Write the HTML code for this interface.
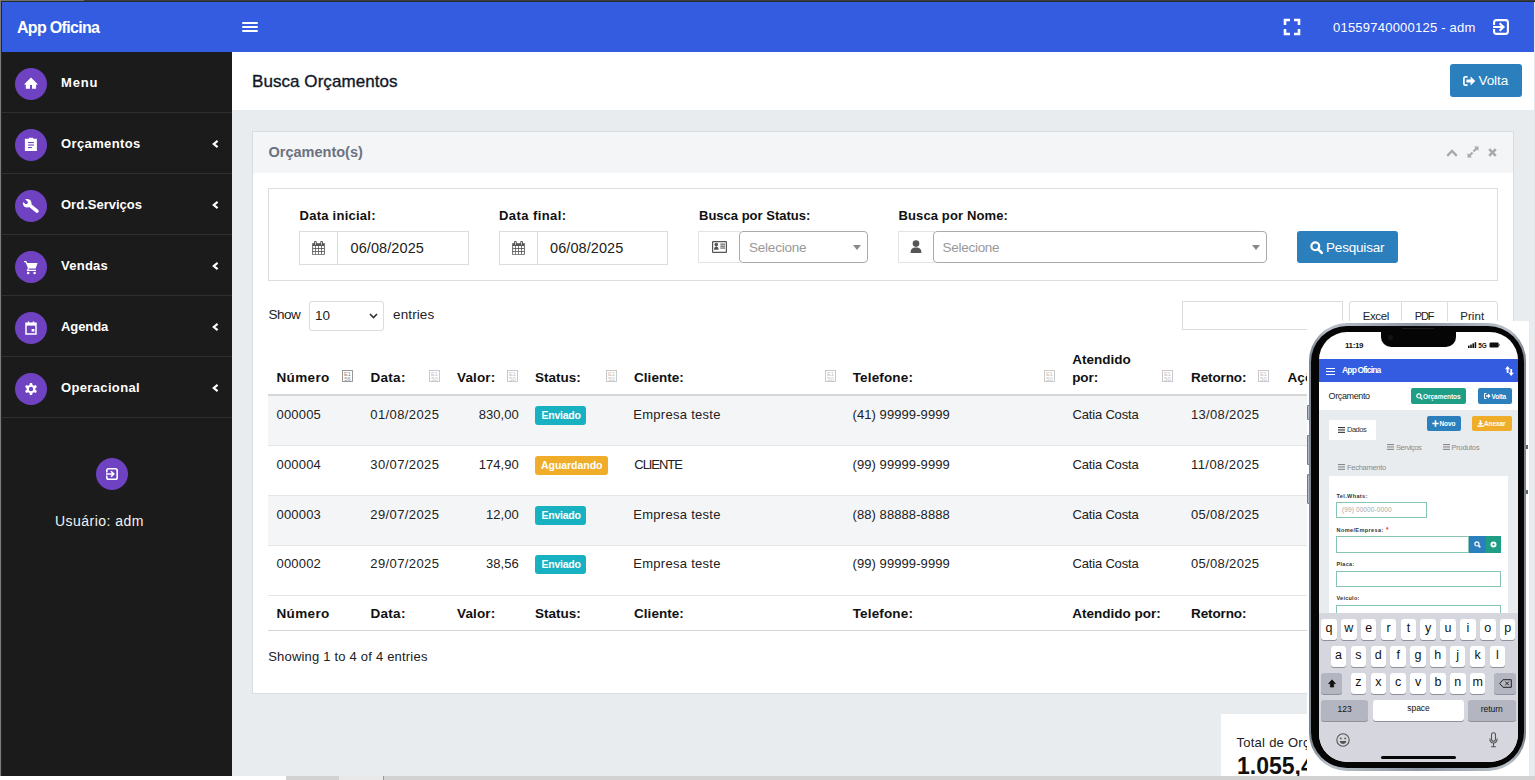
<!DOCTYPE html>
<html><head><meta charset="utf-8"><title>Busca Orçamentos</title>
<style>
html,body{margin:0;padding:0;}
body{width:1535px;height:780px;overflow:hidden;position:relative;background:#e9ecef;font-family:"Liberation Sans",sans-serif;}
.a{position:absolute;box-sizing:border-box;}
.t{position:absolute;white-space:nowrap;}
svg.a{overflow:visible;}
</style></head><body>
<div class="a" style="left:0px;top:0px;width:1535px;height:1px;background:#6e6e6e"></div>
<div class="a" style="left:84px;top:0px;width:1451px;height:1px;background:#3c3c3c"></div>
<div class="a" style="left:0px;top:1px;width:1535px;height:1px;background:#262a33"></div>
<div class="a" style="left:0px;top:0px;width:1px;height:780px;background:#7a7a7a"></div>
<div class="a" style="left:1px;top:1px;width:1px;height:776px;background:#22252b"></div>
<div class="a" style="left:1534px;top:2px;width:1px;height:776px;background:#e4e6ea"></div>
<div class="a" style="left:2px;top:2px;width:1532px;height:50px;background:#345ce0"></div>
<span id="t3844610" class="t" style="left:17px;top:18px;font-size:16px;line-height:20px;color:#ffffff;font-weight:bold;letter-spacing:-0.688px;">App Oficina</span>
<div class="a" style="left:242px;top:22px;width:16px;height:2px;background:#fff;border-radius:1px"></div>
<div class="a" style="left:242px;top:26px;width:16px;height:2px;background:#fff;border-radius:1px"></div>
<div class="a" style="left:242px;top:30px;width:16px;height:2px;background:#fff;border-radius:1px"></div>
<svg class="a" style="left:1285px;top:20px;" width="14" height="14" viewBox="0 0 14 14"><path d="M0 5V0H5M9 0H14V5M14 9V14H9M5 14H0V9" fill="none" stroke="#fff" stroke-width="2.6"/></svg>
<span id="t7c07fb4" class="t" style="left:1333px;top:20px;font-size:13px;line-height:16px;color:#ffffff;letter-spacing:0.225px;">01559740000125 - adm</span>
<svg class="a" style="left:1493px;top:19px;" width="16" height="16" viewBox="0 0 16 16"><path d="M1.1 6V3.5Q1.1 1.1 3.5 1.1H12.5Q14.9 1.1 14.9 3.5V12.5Q14.9 14.9 12.5 14.9H3.5Q1.1 14.9 1.1 12.5V10" fill="none" stroke="#fff" stroke-width="2.1"/><path d="M0 8H10.5M6.6 4.3L10.5 8L6.6 11.7" fill="none" stroke="#fff" stroke-width="2.1"/></svg>
<div class="a" style="left:2px;top:52px;width:230px;height:724px;background:#1b1b1b"></div>
<div class="a" style="left:2px;top:112px;width:230px;height:1px;background:#2f2f2f"></div>
<div class="a" style="left:2px;top:173px;width:230px;height:1px;background:#2f2f2f"></div>
<div class="a" style="left:2px;top:234px;width:230px;height:1px;background:#2f2f2f"></div>
<div class="a" style="left:2px;top:295px;width:230px;height:1px;background:#2f2f2f"></div>
<div class="a" style="left:2px;top:356px;width:230px;height:1px;background:#2f2f2f"></div>
<div class="a" style="left:2px;top:417px;width:230px;height:1px;background:#2f2f2f"></div>
<div class="a" style="left:15px;top:68px;width:32px;height:32px;background:#6f42c1;border-radius:50%"></div>
<span id="t05fff25" class="t" style="left:61px;top:75px;font-size:13px;line-height:16px;color:#ffffff;font-weight:bold;letter-spacing:0.800px;">Menu</span>
<div class="a" style="left:15px;top:129px;width:32px;height:32px;background:#6f42c1;border-radius:50%"></div>
<span id="t3644cc4" class="t" style="left:61px;top:136px;font-size:13px;line-height:16px;color:#ffffff;font-weight:bold;letter-spacing:0.385px;">Orçamentos</span>
<svg class="a" style="left:212px;top:140px;" width="7" height="8" viewBox="0 0 7 8"><path d="M5.6 0.8L1.8 4L5.6 7.2" fill="none" stroke="#fff" stroke-width="2.2"/></svg>
<div class="a" style="left:15px;top:190px;width:32px;height:32px;background:#6f42c1;border-radius:50%"></div>
<span id="t026af12" class="t" style="left:61px;top:197px;font-size:13px;line-height:16px;color:#ffffff;font-weight:bold;letter-spacing:0.009px;">Ord.Serviços</span>
<svg class="a" style="left:212px;top:201px;" width="7" height="8" viewBox="0 0 7 8"><path d="M5.6 0.8L1.8 4L5.6 7.2" fill="none" stroke="#fff" stroke-width="2.2"/></svg>
<div class="a" style="left:15px;top:251px;width:32px;height:32px;background:#6f42c1;border-radius:50%"></div>
<span id="ta9224ba" class="t" style="left:61px;top:258px;font-size:13px;line-height:16px;color:#ffffff;font-weight:bold;letter-spacing:0.261px;">Vendas</span>
<svg class="a" style="left:212px;top:262px;" width="7" height="8" viewBox="0 0 7 8"><path d="M5.6 0.8L1.8 4L5.6 7.2" fill="none" stroke="#fff" stroke-width="2.2"/></svg>
<div class="a" style="left:15px;top:312px;width:32px;height:32px;background:#6f42c1;border-radius:50%"></div>
<span id="t454b5a0" class="t" style="left:61px;top:319px;font-size:13px;line-height:16px;color:#ffffff;font-weight:bold;letter-spacing:-0.088px;">Agenda</span>
<svg class="a" style="left:212px;top:323px;" width="7" height="8" viewBox="0 0 7 8"><path d="M5.6 0.8L1.8 4L5.6 7.2" fill="none" stroke="#fff" stroke-width="2.2"/></svg>
<div class="a" style="left:15px;top:373px;width:32px;height:32px;background:#6f42c1;border-radius:50%"></div>
<span id="t2a424bd" class="t" style="left:61px;top:380px;font-size:13px;line-height:16px;color:#ffffff;font-weight:bold;letter-spacing:0.347px;">Operacional</span>
<svg class="a" style="left:212px;top:384px;" width="7" height="8" viewBox="0 0 7 8"><path d="M5.6 0.8L1.8 4L5.6 7.2" fill="none" stroke="#fff" stroke-width="2.2"/></svg>
<svg class="a" style="left:23px;top:76px;" width="16" height="16" viewBox="0 0 16 16"><path d="M8 1.6L0.9 8.4H2.8V12.8H7V9H9V12.8H13.1V8.4H15Z" fill="#fff"/></svg>
<svg class="a" style="left:23px;top:137px;" width="16" height="16" viewBox="0 0 16 16"><path d="M1.9 1.7H5.9V0.8H10.2V1.7H13.9V13.9H1.9Z" fill="#fff"/><rect x="5" y="5" width="5.9" height="1.1" fill="#6f42c1"/><rect x="5" y="7.5" width="5.9" height="1.1" fill="#6f42c1"/><rect x="5" y="10" width="3.9" height="1.1" fill="#6f42c1"/></svg>
<svg class="a" style="left:23px;top:198px;" width="16" height="16" viewBox="0 0 16 16"><circle cx="4.2" cy="5.2" r="4.3" fill="#fff"/><path d="M4.2 5.2L14 13.2" stroke="#fff" stroke-width="3.5" stroke-linecap="round"/><circle cx="3.27" cy="4.44" r="1.6" fill="#6f42c1"/><path d="M4.28 3.2L2.26 5.68L-2.4 1.9L-0.38 -0.58Z" fill="#6f42c1"/></svg>
<svg class="a" style="left:23px;top:259px;" width="16" height="16" viewBox="0 0 16 16"><path d="M1 2H3.4L4.2 4H14.6L12.6 9.6H5.9L5.4 10.8H13V12H3.6L4.9 9.1L2.6 3.2H1Z" fill="#fff"/><circle cx="5.2" cy="14" r="1.3" fill="#fff"/><circle cx="11.6" cy="14" r="1.3" fill="#fff"/></svg>
<svg class="a" style="left:23px;top:320px;" width="16" height="16" viewBox="0 0 16 16"><path d="M3 3.2H13V14H3Z" fill="none" stroke="#fff" stroke-width="1.5"/><rect x="3" y="3" width="10" height="2.6" fill="#fff"/><rect x="4.8" y="1.5" width="1.5" height="2" fill="#fff"/><rect x="9.7" y="1.5" width="1.5" height="2" fill="#fff"/><rect x="8.6" y="9" width="2.8" height="2.6" fill="#fff"/></svg>
<svg class="a" style="left:23px;top:381px;" width="16" height="16" viewBox="0 0 16 16"><path d="M6.9 1.5H9.1L9.5 3.4L10.9 4.2L12.8 3.5L13.9 5.4L12.4 6.7V8.3L13.9 9.6L12.8 11.5L10.9 10.8L9.5 11.6L9.1 13.5H6.9L6.5 11.6L5.1 10.8L3.2 11.5L2.1 9.6L3.6 8.3V6.7L2.1 5.4L3.2 3.5L5.1 4.2L6.5 3.4Z" fill="#fff" transform="translate(0 0.5)"/><circle cx="8" cy="8" r="2.2" fill="#6f42c1"/></svg>
<div class="a" style="left:96px;top:458px;width:32px;height:32px;background:#6f42c1;border-radius:50%"></div>
<svg class="a" style="left:106px;top:468px;" width="12" height="12" viewBox="0 0 12 12"><path d="M0.8 4.4V2.6Q0.8 0.8 2.6 0.8H9.4Q11.2 0.8 11.2 2.6V9.4Q11.2 11.2 9.4 11.2H2.6Q0.8 11.2 0.8 9.4V7.6" fill="none" stroke="#fff" stroke-width="1.6"/><path d="M0 6H7.8M5 3.2L7.8 6L5 8.8" fill="none" stroke="#fff" stroke-width="1.6"/></svg>
<span id="t62e38f2" class="t" style="left:55px;top:512px;font-size:14px;line-height:18px;color:#f2f2f2;letter-spacing:0.464px;">Usuário: adm</span>
<div class="a" style="left:232px;top:52px;width:1302px;height:58px;background:#ffffff"></div>
<span id="t12267e2" class="t" style="left:252px;top:71px;font-size:17px;line-height:21px;color:#111827;letter-spacing:0.063px;-webkit-text-stroke:0.35px #111827;">Busca Orçamentos</span>
<div class="a" style="left:1450px;top:64px;width:72px;height:33px;background:#2c7fbd;border-radius:3px"></div>
<svg class="a" style="left:1462.5px;top:75.5px;" width="13" height="10" viewBox="0 0 13 10"><path d="M4.6 0.9H2.3Q0.9 0.9 0.9 2.3V7.7Q0.9 9.1 2.3 9.1H4.6" fill="none" stroke="#fff" stroke-width="1.7"/><path d="M3.4 3.5H7.6V0.5L12.3 5L7.6 9.5V6.5H3.4Z" fill="#fff"/></svg>
<span id="t0b6fca9" class="t" style="left:1478.5px;top:72px;font-size:13.5px;line-height:17px;color:#ffffff;letter-spacing:-0.079px;">Volta</span>
<div class="a" style="left:252px;top:131px;width:1262px;height:563px;background:#ffffff;border:1px solid #d9dde2"></div>
<div class="a" style="left:253px;top:132px;width:1260px;height:41px;background:#f4f5f7"></div>
<span id="tc74408b" class="t" style="left:268.5px;top:143px;font-size:14.5px;line-height:18px;color:#6b7280;font-weight:bold;letter-spacing:0.005px;">Orçamento(s)</span>
<svg class="a" style="left:1446px;top:149px;" width="12" height="8" viewBox="0 0 12 8"><path d="M1.2 6.8L6 2L10.8 6.8" fill="none" stroke="#a9a9a9" stroke-width="2.4"/></svg>
<svg class="a" style="left:1467px;top:146px;" width="12" height="12" viewBox="0 0 12 12"><path d="M7 0.5H11.5V5L10 3.5L7.2 6.3L5.7 4.8L8.5 2ZM5 11.5H0.5V7L2 8.5L4.8 5.7L6.3 7.2L3.5 10Z" fill="#a9a9a9"/></svg>
<svg class="a" style="left:1488px;top:148px;" width="9" height="9" viewBox="0 0 9 9"><path d="M1.2 1.2L7.8 7.8M7.8 1.2L1.2 7.8" fill="none" stroke="#a9a9a9" stroke-width="2.6"/></svg>
<div class="a" style="left:268px;top:188px;width:1230px;height:93px;border:1px solid #dddddd;background:#fff"></div>
<span id="t16287fb" class="t" style="left:299.5px;top:208px;font-size:13px;line-height:16px;color:#111111;font-weight:bold;letter-spacing:0.255px;">Data inicial:</span>
<span id="tb9f4da7" class="t" style="left:499px;top:208px;font-size:13px;line-height:16px;color:#111111;font-weight:bold;letter-spacing:0.429px;">Data final:</span>
<span id="td3a6fcb" class="t" style="left:699px;top:208px;font-size:13px;line-height:16px;color:#111111;font-weight:bold;letter-spacing:0.005px;">Busca por Status:</span>
<span id="t035586a" class="t" style="left:898.5px;top:208px;font-size:13px;line-height:16px;color:#111111;font-weight:bold;letter-spacing:0.121px;">Busca por Nome:</span>
<div class="a" style="left:299px;top:231px;width:170px;height:34px;border:1px solid #dcdcdc;background:#fff"></div>
<div class="a" style="left:337px;top:231px;width:1px;height:34px;background:#dcdcdc"></div>
<svg class="a" style="left:312px;top:241px;" width="13" height="14" viewBox="0 0 13 14"><rect x="0.2" y="2.2" width="12.6" height="11.6" fill="#555"/><rect x="2.1" y="0" width="2.6" height="4.4" rx="0.8" fill="#555"/><rect x="8.3" y="0" width="2.6" height="4.4" rx="0.8" fill="#555"/><rect x="3.05" y="0.9" width="0.7" height="3" fill="#fff"/><rect x="9.25" y="0.9" width="0.7" height="3" fill="#fff"/><rect x="1.10" y="5.00" width="2.15" height="2.15" fill="#fff"/><rect x="1.10" y="8.00" width="2.15" height="2.15" fill="#fff"/><rect x="1.10" y="11.00" width="2.15" height="2.15" fill="#fff"/><rect x="4.00" y="5.00" width="2.15" height="2.15" fill="#fff"/><rect x="4.00" y="8.00" width="2.15" height="2.15" fill="#fff"/><rect x="4.00" y="11.00" width="2.15" height="2.15" fill="#fff"/><rect x="6.90" y="5.00" width="2.15" height="2.15" fill="#fff"/><rect x="6.90" y="8.00" width="2.15" height="2.15" fill="#fff"/><rect x="6.90" y="11.00" width="2.15" height="2.15" fill="#fff"/><rect x="9.80" y="5.00" width="2.15" height="2.15" fill="#fff"/><rect x="9.80" y="8.00" width="2.15" height="2.15" fill="#fff"/><rect x="9.80" y="11.00" width="2.15" height="2.15" fill="#fff"/></svg>
<div class="a" style="left:499px;top:231px;width:169px;height:34px;border:1px solid #dcdcdc;background:#fff"></div>
<div class="a" style="left:537px;top:231px;width:1px;height:34px;background:#dcdcdc"></div>
<svg class="a" style="left:512px;top:241px;" width="13" height="14" viewBox="0 0 13 14"><rect x="0.2" y="2.2" width="12.6" height="11.6" fill="#555"/><rect x="2.1" y="0" width="2.6" height="4.4" rx="0.8" fill="#555"/><rect x="8.3" y="0" width="2.6" height="4.4" rx="0.8" fill="#555"/><rect x="3.05" y="0.9" width="0.7" height="3" fill="#fff"/><rect x="9.25" y="0.9" width="0.7" height="3" fill="#fff"/><rect x="1.10" y="5.00" width="2.15" height="2.15" fill="#fff"/><rect x="1.10" y="8.00" width="2.15" height="2.15" fill="#fff"/><rect x="1.10" y="11.00" width="2.15" height="2.15" fill="#fff"/><rect x="4.00" y="5.00" width="2.15" height="2.15" fill="#fff"/><rect x="4.00" y="8.00" width="2.15" height="2.15" fill="#fff"/><rect x="4.00" y="11.00" width="2.15" height="2.15" fill="#fff"/><rect x="6.90" y="5.00" width="2.15" height="2.15" fill="#fff"/><rect x="6.90" y="8.00" width="2.15" height="2.15" fill="#fff"/><rect x="6.90" y="11.00" width="2.15" height="2.15" fill="#fff"/><rect x="9.80" y="5.00" width="2.15" height="2.15" fill="#fff"/><rect x="9.80" y="8.00" width="2.15" height="2.15" fill="#fff"/><rect x="9.80" y="11.00" width="2.15" height="2.15" fill="#fff"/></svg>
<span id="tee70ad0" class="t" style="left:350.5px;top:239px;font-size:14.5px;line-height:18px;color:#222222;letter-spacing:0.088px;">06/08/2025</span>
<span id="t63d5776" class="t" style="left:550px;top:239px;font-size:14.5px;line-height:18px;color:#222222;letter-spacing:0.077px;">06/08/2025</span>
<div class="a" style="left:698px;top:231px;width:42px;height:32px;border:1px solid #e3e3e3;border-right:none;background:#fff"></div>
<div class="a" style="left:739px;top:231px;width:129px;height:32px;border:1px solid #aaaaaa;border-radius:4px;background:#fff"></div>
<svg class="a" style="left:712px;top:241px;" width="15" height="12" viewBox="0 0 15 12"><rect x="0.6" y="0.6" width="13.8" height="10.8" rx="0.6" fill="none" stroke="#555" stroke-width="1.2"/><circle cx="4.3" cy="3.6" r="1.8" fill="#555"/><path d="M2 8.8C2 6.3 3 5.4 4.3 5.4C5.6 5.4 6.6 6.3 6.6 8.8Z" fill="#555"/><rect x="8.3" y="2.6" width="4.7" height="1.1" fill="#555"/><rect x="8.3" y="4.6" width="4.7" height="1.1" fill="#555"/><rect x="8.3" y="6.5" width="4.7" height="1.1" fill="#555"/></svg>
<span id="tad4dbb3" class="t" style="left:749px;top:239px;font-size:13.5px;line-height:17px;color:#999999;letter-spacing:-0.223px;">Selecione</span>
<svg class="a" style="left:853px;top:245px;" width="8" height="5" viewBox="0 0 8 5"><path d="M0 0H8L4 5Z" fill="#888"/></svg>
<div class="a" style="left:898px;top:231px;width:36px;height:32px;border:1px solid #e3e3e3;border-right:none;background:#fff"></div>
<div class="a" style="left:933px;top:231px;width:334px;height:32px;border:1px solid #aaaaaa;border-radius:4px;background:#fff"></div>
<svg class="a" style="left:910px;top:240px;" width="12" height="13" viewBox="0 0 12 13"><circle cx="6" cy="3.6" r="3.3" fill="#555"/><path d="M0.6 13C0.6 9 2.4 7.4 6 7.4C9.6 7.4 11.4 9 11.4 13Z" fill="#555"/></svg>
<span id="t9849f6e" class="t" style="left:942.5px;top:239px;font-size:13.5px;line-height:17px;color:#999999;letter-spacing:-0.273px;">Selecione</span>
<svg class="a" style="left:1252px;top:245px;" width="8" height="5" viewBox="0 0 8 5"><path d="M0 0H8L4 5Z" fill="#888"/></svg>
<div class="a" style="left:1297px;top:231px;width:101px;height:32px;background:#2c7fbd;border-radius:3px"></div>
<svg class="a" style="left:1310px;top:241px;" width="13" height="13" viewBox="0 0 13 13"><circle cx="5.3" cy="5.3" r="3.9" fill="none" stroke="#fff" stroke-width="2.2"/><path d="M8 8L11.8 11.8" stroke="#fff" stroke-width="2.6" stroke-linecap="round"/></svg>
<span id="t9627498" class="t" style="left:1326px;top:239px;font-size:13.5px;line-height:17px;color:#ffffff;letter-spacing:-0.192px;">Pesquisar</span>
<span id="t1233605" class="t" style="left:268.5px;top:306px;font-size:13.5px;line-height:17px;color:#222222;letter-spacing:-0.540px;">Show</span>
<div class="a" style="left:309px;top:301px;width:75px;height:30px;border:1px solid #dcdcdc;border-radius:3px;background:#fff"></div>
<span id="t2b96cef" class="t" style="left:315px;top:307px;font-size:13.5px;line-height:17px;color:#222222;">10</span>
<svg class="a" style="left:369px;top:313px;" width="9" height="6" viewBox="0 0 9 6"><path d="M1 1L4.5 4.6L8 1" fill="none" stroke="#333" stroke-width="1.6"/></svg>
<span id="te23a043" class="t" style="left:393px;top:306px;font-size:13.5px;line-height:17px;color:#222222;letter-spacing:0.122px;">entries</span>
<div class="a" style="left:1182px;top:301px;width:161px;height:29px;border:1px solid #dcdcdc;background:#fff"></div>
<div class="a" style="left:1349px;top:301px;width:149px;height:40px;border:1px solid #dcdcdc;border-radius:3px;background:#fff"></div>
<div class="a" style="left:1401px;top:301px;width:1px;height:40px;background:#dcdcdc"></div>
<div class="a" style="left:1447px;top:301px;width:1px;height:40px;background:#dcdcdc"></div>
<span id="t9d855ee" class="t" style="left:1362.7px;top:309px;font-size:11.5px;line-height:14px;color:#222222;letter-spacing:-0.392px;">Excel</span>
<span id="ta81a557" class="t" style="left:1414.8px;top:309px;font-size:11px;line-height:14px;color:#222222;letter-spacing:-1.140px;">PDF</span>
<span id="t1a40218" class="t" style="left:1460.2px;top:309px;font-size:11.5px;line-height:14px;color:#222222;letter-spacing:0.062px;">Print</span>
<div class="a" style="left:268px;top:394px;width:1230px;height:2px;background:#d6d6d6"></div>
<div class="a" style="left:268px;top:396px;width:1230px;height:49px;background:#f4f5f7"></div>
<div class="a" style="left:268px;top:445px;width:1230px;height:1px;background:#e3e5e8"></div>
<div class="a" style="left:268px;top:446px;width:1230px;height:49px;background:#ffffff"></div>
<div class="a" style="left:268px;top:495px;width:1230px;height:1px;background:#e3e5e8"></div>
<div class="a" style="left:268px;top:496px;width:1230px;height:49px;background:#f4f5f7"></div>
<div class="a" style="left:268px;top:545px;width:1230px;height:1px;background:#e3e5e8"></div>
<div class="a" style="left:268px;top:546px;width:1230px;height:49px;background:#ffffff"></div>
<div class="a" style="left:268px;top:595px;width:1230px;height:1px;background:#e3e5e8"></div>
<div class="a" style="left:268px;top:630px;width:1230px;height:1px;background:#d6d6d6"></div>
<span id="t7fdc01c" class="t" style="left:276.5px;top:369px;font-size:13.5px;line-height:17px;color:#111111;font-weight:bold;letter-spacing:0.348px;">Número</span>
<svg class="a" style="left:342px;top:370px;" width="11" height="12" viewBox="0 0 11 12"><rect x="0.5" y="0.5" width="10" height="11" fill="none" stroke="#8f8f8f" stroke-width="0.9"/><text x="5.5" y="5.6" font-size="5.8" font-family="Liberation Sans" text-anchor="middle" fill="#8f8f8f">E1</text><text x="5.5" y="10.8" font-size="5.8" font-family="Liberation Sans" text-anchor="middle" fill="#8f8f8f">56</text></svg>
<span id="t315c8e1" class="t" style="left:370.5px;top:369px;font-size:13.5px;line-height:17px;color:#111111;font-weight:bold;letter-spacing:0.285px;">Data:</span>
<svg class="a" style="left:429px;top:370px;" width="11" height="12" viewBox="0 0 11 12"><rect x="0.5" y="0.5" width="10" height="11" fill="none" stroke="#c4c4c4" stroke-width="0.9"/><text x="5.5" y="5.6" font-size="5.8" font-family="Liberation Sans" text-anchor="middle" fill="#c4c4c4">E1</text><text x="5.5" y="10.8" font-size="5.8" font-family="Liberation Sans" text-anchor="middle" fill="#c4c4c4">50</text></svg>
<span id="t878f6c0" class="t" style="left:457px;top:369px;font-size:13.5px;line-height:17px;color:#111111;font-weight:bold;letter-spacing:0.136px;">Valor:</span>
<svg class="a" style="left:507px;top:370px;" width="11" height="12" viewBox="0 0 11 12"><rect x="0.5" y="0.5" width="10" height="11" fill="none" stroke="#c4c4c4" stroke-width="0.9"/><text x="5.5" y="5.6" font-size="5.8" font-family="Liberation Sans" text-anchor="middle" fill="#c4c4c4">E1</text><text x="5.5" y="10.8" font-size="5.8" font-family="Liberation Sans" text-anchor="middle" fill="#c4c4c4">50</text></svg>
<span id="tbff36d7" class="t" style="left:535px;top:369px;font-size:13.5px;line-height:17px;color:#111111;font-weight:bold;letter-spacing:0.007px;">Status:</span>
<svg class="a" style="left:606px;top:370px;" width="11" height="12" viewBox="0 0 11 12"><rect x="0.5" y="0.5" width="10" height="11" fill="none" stroke="#c4c4c4" stroke-width="0.9"/><text x="5.5" y="5.6" font-size="5.8" font-family="Liberation Sans" text-anchor="middle" fill="#c4c4c4">E1</text><text x="5.5" y="10.8" font-size="5.8" font-family="Liberation Sans" text-anchor="middle" fill="#c4c4c4">50</text></svg>
<span id="t8206e51" class="t" style="left:634px;top:369px;font-size:13.5px;line-height:17px;color:#111111;font-weight:bold;letter-spacing:0.042px;">Cliente:</span>
<svg class="a" style="left:825px;top:370px;" width="11" height="12" viewBox="0 0 11 12"><rect x="0.5" y="0.5" width="10" height="11" fill="none" stroke="#c4c4c4" stroke-width="0.9"/><text x="5.5" y="5.6" font-size="5.8" font-family="Liberation Sans" text-anchor="middle" fill="#c4c4c4">E1</text><text x="5.5" y="10.8" font-size="5.8" font-family="Liberation Sans" text-anchor="middle" fill="#c4c4c4">50</text></svg>
<span id="tf04daf3" class="t" style="left:852.7px;top:369px;font-size:13.5px;line-height:17px;color:#111111;font-weight:bold;letter-spacing:0.149px;">Telefone:</span>
<svg class="a" style="left:1044px;top:370px;" width="11" height="12" viewBox="0 0 11 12"><rect x="0.5" y="0.5" width="10" height="11" fill="none" stroke="#c4c4c4" stroke-width="0.9"/><text x="5.5" y="5.6" font-size="5.8" font-family="Liberation Sans" text-anchor="middle" fill="#c4c4c4">E1</text><text x="5.5" y="10.8" font-size="5.8" font-family="Liberation Sans" text-anchor="middle" fill="#c4c4c4">50</text></svg>
<span id="t588aad5" class="t" style="left:1072.2px;top:351px;font-size:13.5px;line-height:17px;color:#111111;font-weight:bold;letter-spacing:-0.006px;">Atendido</span>
<span id="tfd00142" class="t" style="left:1072.2px;top:369px;font-size:13.5px;line-height:17px;color:#111111;font-weight:bold;letter-spacing:-0.082px;">por:</span>
<svg class="a" style="left:1162px;top:370px;" width="11" height="12" viewBox="0 0 11 12"><rect x="0.5" y="0.5" width="10" height="11" fill="none" stroke="#c4c4c4" stroke-width="0.9"/><text x="5.5" y="5.6" font-size="5.8" font-family="Liberation Sans" text-anchor="middle" fill="#c4c4c4">E1</text><text x="5.5" y="10.8" font-size="5.8" font-family="Liberation Sans" text-anchor="middle" fill="#c4c4c4">50</text></svg>
<span id="t66cc0b8" class="t" style="left:1191px;top:369px;font-size:13.5px;line-height:17px;color:#111111;font-weight:bold;letter-spacing:-0.107px;">Retorno:</span>
<svg class="a" style="left:1258px;top:370px;" width="11" height="12" viewBox="0 0 11 12"><rect x="0.5" y="0.5" width="10" height="11" fill="none" stroke="#c4c4c4" stroke-width="0.9"/><text x="5.5" y="5.6" font-size="5.8" font-family="Liberation Sans" text-anchor="middle" fill="#c4c4c4">E1</text><text x="5.5" y="10.8" font-size="5.8" font-family="Liberation Sans" text-anchor="middle" fill="#c4c4c4">50</text></svg>
<span id="t51c2212" class="t" style="left:1287.5px;top:369px;font-size:13.5px;line-height:17px;color:#111111;font-weight:bold;letter-spacing:0.096px;">Ações:</span>
<span id="td0a66e8" class="t" style="left:276.5px;top:407px;font-size:13px;line-height:16px;color:#212121;letter-spacing:0.190px;">000005</span>
<span id="tbb2fb57" class="t" style="left:370.3px;top:407px;font-size:13px;line-height:16px;color:#212121;letter-spacing:0.396px;">01/08/2025</span>
<span id="tb4ec891" class="t" style="left:478.8px;top:407px;font-size:13px;line-height:16px;color:#212121;letter-spacing:0.034px;">830,00</span>
<div class="a" style="left:535px;top:406px;width:51px;height:19px;background:#17b1c1;border-radius:3px"></div>
<span id="t6d185a9" class="t" style="left:541.5px;top:409px;font-size:10.5px;line-height:13px;color:#ffffff;font-weight:bold;letter-spacing:-0.238px;">Enviado</span>
<span id="tb33aea7" class="t" style="left:633.3px;top:407px;font-size:13px;line-height:16px;color:#212121;letter-spacing:0.276px;">Empresa teste</span>
<span id="tc2245d9" class="t" style="left:852.5px;top:407px;font-size:13px;line-height:16px;color:#212121;letter-spacing:0.079px;">(41) 99999-9999</span>
<span id="t7f2918e" class="t" style="left:1072.5px;top:407px;font-size:13px;line-height:16px;color:#212121;letter-spacing:-0.179px;">Catia Costa</span>
<span id="t5357dce" class="t" style="left:1191px;top:407px;font-size:13px;line-height:16px;color:#212121;letter-spacing:0.330px;">13/08/2025</span>
<span id="t4b98967" class="t" style="left:276.5px;top:457px;font-size:13px;line-height:16px;color:#212121;letter-spacing:0.190px;">000004</span>
<span id="t5da2af1" class="t" style="left:370.3px;top:457px;font-size:13px;line-height:16px;color:#212121;letter-spacing:0.396px;">30/07/2025</span>
<span id="t75158d8" class="t" style="left:478.8px;top:457px;font-size:13px;line-height:16px;color:#212121;letter-spacing:0.034px;">174,90</span>
<div class="a" style="left:535px;top:456px;width:73px;height:19px;background:#f0ad29;border-radius:3px"></div>
<span id="tbde27e2" class="t" style="left:541px;top:459px;font-size:10.5px;line-height:13px;color:#ffffff;font-weight:bold;letter-spacing:-0.046px;">Aguardando</span>
<span id="t297bf46" class="t" style="left:634.3px;top:457px;font-size:13px;line-height:16px;color:#212121;letter-spacing:-1.055px;">CLIENTE</span>
<span id="t4e63f4e" class="t" style="left:852.5px;top:457px;font-size:13px;line-height:16px;color:#212121;letter-spacing:0.079px;">(99) 99999-9999</span>
<span id="t7991a19" class="t" style="left:1072.5px;top:457px;font-size:13px;line-height:16px;color:#212121;letter-spacing:-0.179px;">Catia Costa</span>
<span id="t44d7c51" class="t" style="left:1191px;top:457px;font-size:13px;line-height:16px;color:#212121;letter-spacing:0.437px;">11/08/2025</span>
<span id="tefb9110" class="t" style="left:276.5px;top:507px;font-size:13px;line-height:16px;color:#212121;letter-spacing:0.190px;">000003</span>
<span id="t28f1806" class="t" style="left:370.3px;top:507px;font-size:13px;line-height:16px;color:#212121;letter-spacing:0.396px;">29/07/2025</span>
<span id="t96b863d" class="t" style="left:486.0px;top:507px;font-size:13px;line-height:16px;color:#212121;letter-spacing:0.050px;">12,00</span>
<div class="a" style="left:535px;top:506px;width:51px;height:19px;background:#17b1c1;border-radius:3px"></div>
<span id="t25545bc" class="t" style="left:541.5px;top:509px;font-size:10.5px;line-height:13px;color:#ffffff;font-weight:bold;letter-spacing:-0.238px;">Enviado</span>
<span id="te959f49" class="t" style="left:633.3px;top:507px;font-size:13px;line-height:16px;color:#212121;letter-spacing:0.276px;">Empresa teste</span>
<span id="ta02dc32" class="t" style="left:852.5px;top:507px;font-size:13px;line-height:16px;color:#212121;letter-spacing:0.079px;">(88) 88888-8888</span>
<span id="t1dd4ffc" class="t" style="left:1072.5px;top:507px;font-size:13px;line-height:16px;color:#212121;letter-spacing:-0.179px;">Catia Costa</span>
<span id="tf215b4a" class="t" style="left:1191px;top:507px;font-size:13px;line-height:16px;color:#212121;letter-spacing:0.330px;">05/08/2025</span>
<span id="t5952e31" class="t" style="left:276.5px;top:556px;font-size:13px;line-height:16px;color:#212121;letter-spacing:0.190px;">000002</span>
<span id="td9ddae6" class="t" style="left:370.3px;top:556px;font-size:13px;line-height:16px;color:#212121;letter-spacing:0.396px;">29/07/2025</span>
<span id="t292e125" class="t" style="left:486.0px;top:556px;font-size:13px;line-height:16px;color:#212121;letter-spacing:0.050px;">38,56</span>
<div class="a" style="left:535px;top:555px;width:51px;height:19px;background:#17b1c1;border-radius:3px"></div>
<span id="tccbe9bb" class="t" style="left:541.5px;top:558px;font-size:10.5px;line-height:13px;color:#ffffff;font-weight:bold;letter-spacing:-0.238px;">Enviado</span>
<span id="te1d0985" class="t" style="left:633.3px;top:556px;font-size:13px;line-height:16px;color:#212121;letter-spacing:0.276px;">Empresa teste</span>
<span id="teda3977" class="t" style="left:852.5px;top:556px;font-size:13px;line-height:16px;color:#212121;letter-spacing:0.079px;">(99) 99999-9999</span>
<span id="t9febd0b" class="t" style="left:1072.5px;top:556px;font-size:13px;line-height:16px;color:#212121;letter-spacing:-0.179px;">Catia Costa</span>
<span id="tbcd6237" class="t" style="left:1191px;top:556px;font-size:13px;line-height:16px;color:#212121;letter-spacing:0.330px;">05/08/2025</span>
<span id="t693fb78" class="t" style="left:276.5px;top:605px;font-size:13.5px;line-height:17px;color:#111111;font-weight:bold;letter-spacing:0.348px;">Número</span>
<span id="t863e6f6" class="t" style="left:370.5px;top:605px;font-size:13.5px;line-height:17px;color:#111111;font-weight:bold;letter-spacing:0.285px;">Data:</span>
<span id="t4efe24d" class="t" style="left:457px;top:605px;font-size:13.5px;line-height:17px;color:#111111;font-weight:bold;letter-spacing:0.136px;">Valor:</span>
<span id="t5fa796b" class="t" style="left:535px;top:605px;font-size:13.5px;line-height:17px;color:#111111;font-weight:bold;letter-spacing:0.007px;">Status:</span>
<span id="taf3a9bd" class="t" style="left:634px;top:605px;font-size:13.5px;line-height:17px;color:#111111;font-weight:bold;letter-spacing:0.042px;">Cliente:</span>
<span id="tdaa296d" class="t" style="left:852.7px;top:605px;font-size:13.5px;line-height:17px;color:#111111;font-weight:bold;letter-spacing:0.149px;">Telefone:</span>
<span id="t05985de" class="t" style="left:1072.2px;top:605px;font-size:13.5px;line-height:17px;color:#111111;font-weight:bold;letter-spacing:0.001px;">Atendido por:</span>
<span id="tb5bc259" class="t" style="left:1191px;top:605px;font-size:13.5px;line-height:17px;color:#111111;font-weight:bold;letter-spacing:-0.107px;">Retorno:</span>
<span id="t543b139" class="t" style="left:268.2px;top:649px;font-size:13px;line-height:16px;color:#212121;letter-spacing:0.203px;">Showing 1 to 4 of 4 entries</span>
<div class="a" style="left:1221px;top:714px;width:120px;height:62px;background:#ffffff"></div>
<span id="t588883f" class="t" style="left:1236.5px;top:735px;font-size:13px;line-height:16px;color:#212121;letter-spacing:0.26px;">Total de Orçamentos</span>
<span id="t8b8ec6e" class="t" style="left:1237px;top:752px;font-size:23px;line-height:29px;color:#111111;font-weight:bold;-webkit-text-stroke:0px;">1.055,46</span>
<div class="a" style="left:0px;top:776px;width:1535px;height:4px;background:#d2d2d2"></div>
<div class="a" style="left:0px;top:776px;width:286px;height:4px;background:#ffffff"></div>
<div class="a" style="left:339px;top:776px;width:44px;height:4px;background:#e9e9e9"></div>
<div class="a" style="left:383px;top:776px;width:1px;height:4px;background:#9a9a9a"></div>
<div class="a" style="left:1307px;top:321px;width:222px;height:455px;background:#ffffff"></div>
<div class="a" style="left:1306.5px;top:405px;width:3px;height:15px;background:#b4bbc5;border:0.6px solid #6f7986;border-radius:1px"></div>
<div class="a" style="left:1306.5px;top:435px;width:3px;height:30px;background:#b4bbc5;border:0.6px solid #6f7986;border-radius:1px"></div>
<div class="a" style="left:1306.5px;top:474px;width:3px;height:30px;background:#b4bbc5;border:0.6px solid #6f7986;border-radius:1px"></div>
<div class="a" style="left:1526px;top:445px;width:1.5px;height:4px;background:#5d6570"></div>
<div class="a" style="left:1526px;top:490px;width:1.5px;height:4px;background:#5d6570"></div>
<div class="a" style="left:1309px;top:323px;width:217px;height:448px;background:linear-gradient(90deg,#7a828d,#b9c0c9 8%,#8e98a4 50%,#b9c0c9 92%,#7a828d);border-radius:38px"></div>
<div class="a" style="left:1311px;top:326px;width:213px;height:442px;background:#050505;border-radius:36px"></div>
<div class="a" style="left:1402px;top:327.5px;width:32px;height:1.2px;background:#1b1b1b;border-radius:1px"></div>
<div class="a" style="left:0;top:0;width:1535px;height:780px;clip-path:inset(332px 17px 18px 1319px round 28px);">
<div class="a" style="left:1319px;top:332px;width:199px;height:430px;background:#ffffff"></div>
<span id="tba48d64" class="t" style="left:1345px;top:341px;font-size:8px;line-height:10px;color:#111111;font-weight:bold;letter-spacing:-0.393px;">11:19</span>
<svg class="a" style="left:1468px;top:341.5px;" width="32" height="6" viewBox="0 0 32 6"><rect x="0" y="3.6" width="1.6" height="2.4" fill="#111"/><rect x="2.2" y="2.6" width="1.6" height="3.4" fill="#111"/><rect x="4.4" y="1.4" width="1.6" height="4.6" fill="#111"/><rect x="6.6" y="0.2" width="1.6" height="5.8" fill="#111"/><text x="10.2" y="6" font-size="6.4" font-weight="bold" font-family="Liberation Sans" fill="#111">5G</text><rect x="21.5" y="0.6" width="9.2" height="4.8" rx="1.2" fill="#111"/><rect x="31" y="2.2" width="0.9" height="1.6" fill="#666"/></svg>
<div class="a" style="left:1381px;top:322px;width:75px;height:25px;background:#050505;border-radius:0 0 10px 10px"></div>
<div class="a" style="left:1388px;top:335px;width:5px;height:5px;background:#12141a;border-radius:50%"></div>
<div class="a" style="left:1319px;top:359px;width:199px;height:23px;background:#345ce0"></div>
<div class="a" style="left:1325.5px;top:368px;width:9.5px;height:1.4px;background:#fff"></div>
<div class="a" style="left:1325.5px;top:371px;width:9.5px;height:1.4px;background:#fff"></div>
<div class="a" style="left:1325.5px;top:374px;width:9.5px;height:1.4px;background:#fff"></div>
<span id="tf2901cf" class="t" style="left:1342px;top:365px;font-size:8.5px;line-height:11px;color:#ffffff;font-weight:bold;letter-spacing:-0.847px;">App Oficina</span>
<svg class="a" style="left:1505px;top:366px;" width="9" height="10" viewBox="0 0 9 10"><path d="M2.6 0L0 3.2H1.7V7H3.5V3.2H5.2Z" fill="#fff"/><path d="M6.2 10L8.8 6.8H7.1V3H5.3V6.8H3.6Z" fill="#fff"/></svg>
<div class="a" style="left:1319px;top:382px;width:199px;height:28px;background:#ffffff"></div>
<span id="t6243a0c" class="t" style="left:1328.6px;top:391px;font-size:9px;line-height:11px;color:#222222;letter-spacing:-0.389px;">Orçamento</span>
<div class="a" style="left:1411px;top:388px;width:55px;height:16px;background:#1f9e86;border-radius:2px"></div>
<svg class="a" style="left:1416px;top:392.5px;" width="7" height="7" viewBox="0 0 7 7"><circle cx="2.9" cy="2.9" r="2.1" fill="none" stroke="#fff" stroke-width="1.2"/><path d="M4.4 4.4L6.4 6.4" stroke="#fff" stroke-width="1.4"/></svg>
<span id="tde77767" class="t" style="left:1423px;top:393px;font-size:6.5px;line-height:8px;color:#ffffff;font-weight:bold;letter-spacing:-0.035px;">Orçamentos</span>
<div class="a" style="left:1478px;top:388px;width:34px;height:16px;background:#2c7fbd;border-radius:2px"></div>
<svg class="a" style="left:1484px;top:393px;" width="7" height="6" viewBox="0 0 7 6"><path d="M2.5 0.5H0.5V5.5H2.5" fill="none" stroke="#fff" stroke-width="1"/><path d="M2 2.2H4V0.6L6.6 3L4 5.4V3.8H2Z" fill="#fff"/></svg>
<span id="t7272460" class="t" style="left:1491.5px;top:393px;font-size:6.5px;line-height:8px;color:#ffffff;font-weight:bold;letter-spacing:-0.198px;">Volta</span>
<div class="a" style="left:1319px;top:410px;width:199px;height:203px;background:#e9ecef"></div>
<div class="a" style="left:1427px;top:415.5px;width:34px;height:15.5px;background:#2c7fbd;border-radius:2px"></div>
<svg class="a" style="left:1432px;top:419.5px;" width="7" height="7" viewBox="0 0 7 7"><path d="M2.7 0.3H4.3V2.7H6.7V4.3H4.3V6.7H2.7V4.3H0.3V2.7H2.7Z" fill="#fff"/></svg>
<span id="t8f2e44f" class="t" style="left:1439.5px;top:420px;font-size:6.5px;line-height:8px;color:#ffffff;font-weight:bold;letter-spacing:-0.093px;">Novo</span>
<div class="a" style="left:1472px;top:415.5px;width:40px;height:15.5px;background:#f0ad29;border-radius:2px"></div>
<svg class="a" style="left:1476.5px;top:419.5px;" width="7" height="7" viewBox="0 0 7 7"><path d="M2.6 0.2H4.4V3H6L3.5 5.4L1 3H2.6Z" fill="#fff"/><rect x="0.2" y="5.4" width="6.6" height="1.4" fill="#fff"/></svg>
<span id="t022de13" class="t" style="left:1484px;top:420px;font-size:6.5px;line-height:8px;color:#ffffff;font-weight:bold;letter-spacing:-0.102px;">Anexar</span>
<div class="a" style="left:1329px;top:420px;width:47px;height:20px;background:#ffffff"></div>
<svg class="a" style="left:1338px;top:426.5px;" width="7" height="6" viewBox="0 0 7 6"><rect x="0" y="0" width="7" height="1.1" fill="#333"/><rect x="0" y="2.4" width="7" height="1.1" fill="#333"/><rect x="0" y="4.8" width="7" height="1.1" fill="#333"/></svg>
<span id="tbeeb035" class="t" style="left:1347px;top:425px;font-size:7.5px;line-height:9px;color:#333333;letter-spacing:-0.482px;">Dados</span>
<svg class="a" style="left:1387px;top:444px;" width="7" height="6" viewBox="0 0 7 6"><rect x="0" y="0" width="7" height="1.1" fill="#888"/><rect x="0" y="2.4" width="7" height="1.1" fill="#888"/><rect x="0" y="4.8" width="7" height="1.1" fill="#888"/></svg>
<span id="t67a1e47" class="t" style="left:1396px;top:442.5px;font-size:7.5px;line-height:9px;color:#8a8a8a;letter-spacing:-0.430px;">Serviços</span>
<svg class="a" style="left:1442.5px;top:444px;" width="7" height="6" viewBox="0 0 7 6"><rect x="0" y="0" width="7" height="1.1" fill="#888"/><rect x="0" y="2.4" width="7" height="1.1" fill="#888"/><rect x="0" y="4.8" width="7" height="1.1" fill="#888"/></svg>
<span id="t0d4aa5e" class="t" style="left:1451.5px;top:442.5px;font-size:7.5px;line-height:9px;color:#8a8a8a;letter-spacing:-0.253px;">Produtos</span>
<svg class="a" style="left:1338px;top:464px;" width="7" height="6" viewBox="0 0 7 6"><rect x="0" y="0" width="7" height="1.1" fill="#888"/><rect x="0" y="2.4" width="7" height="1.1" fill="#888"/><rect x="0" y="4.8" width="7" height="1.1" fill="#888"/></svg>
<span id="tbdbd776" class="t" style="left:1347px;top:462.5px;font-size:7.5px;line-height:9px;color:#8a8a8a;letter-spacing:-0.280px;">Fechamento</span>
<div class="a" style="left:1329px;top:476px;width:179px;height:140px;background:#ffffff"></div>
<span id="tec0aa6b" class="t" style="left:1336.5px;top:493px;font-size:5.5px;line-height:7px;color:#333333;font-weight:bold;letter-spacing:0.382px;">Tel.Whats:</span>
<div class="a" style="left:1336px;top:501.5px;width:90.5px;height:16.5px;border:1px solid #86c5b5;background:#fff"></div>
<span id="tded22d4" class="t" style="left:1342px;top:506px;font-size:6.5px;line-height:8px;color:#a8a8a8;letter-spacing:0.111px;">(99) 00000-0000</span>
<span id="t78666c4" class="t" style="left:1336.5px;top:527px;font-size:5.5px;line-height:7px;color:#333333;font-weight:bold;letter-spacing:0.413px;">Nome/Empresa:</span>
<span id="t3aee0d0" class="t" style="left:1386px;top:525.5px;font-size:6.5px;line-height:8px;color:#dc3545;font-weight:bold;">*</span>
<div class="a" style="left:1336px;top:536px;width:133px;height:16.5px;border:1px solid #86c5b5;background:#fff"></div>
<div class="a" style="left:1468.5px;top:536px;width:17px;height:16.5px;background:#2c7fbd"></div>
<svg class="a" style="left:1473.5px;top:540.5px;" width="7" height="7" viewBox="0 0 7 7"><circle cx="2.9" cy="2.9" r="2.1" fill="none" stroke="#fff" stroke-width="1.2"/><path d="M4.4 4.4L6.4 6.4" stroke="#fff" stroke-width="1.5"/></svg>
<div class="a" style="left:1485.5px;top:536px;width:15.5px;height:16.5px;background:#1f9e86"></div>
<svg class="a" style="left:1490px;top:541px;" width="7" height="7" viewBox="0 0 7 7"><circle cx="3.5" cy="3.5" r="3" fill="#fff"/><circle cx="3.5" cy="3.5" r="1.1" fill="#1f9e86"/></svg>
<span id="t8832357" class="t" style="left:1336.5px;top:561px;font-size:5.5px;line-height:7px;color:#333333;font-weight:bold;letter-spacing:0.325px;">Placa:</span>
<div class="a" style="left:1336px;top:570.5px;width:165px;height:16.5px;border:1px solid #86c5b5;background:#fff"></div>
<span id="ta936863" class="t" style="left:1336.5px;top:595px;font-size:5.5px;line-height:7px;color:#333333;font-weight:bold;letter-spacing:0.249px;">Veiculo:</span>
<div class="a" style="left:1336px;top:605px;width:165px;height:16.5px;border:1px solid #86c5b5;background:#fff"></div>
<div class="a" style="left:1319px;top:613px;width:199px;height:150px;background:#d6d7de"></div>
<div class="a" style="left:1321.2px;top:619px;width:15.6px;height:20.5px;background:#ffffff;border-radius:3px;box-shadow:0 1px 0 #8f929b"></div>
<div class="a" style="left:1321.2px;top:618px;width:15.6px;height:20.5px;line-height:20.5px;text-align:center;font-size:12.5px;color:#111;font-family:'Liberation Sans',sans-serif">q</div>
<div class="a" style="left:1341.05px;top:619px;width:15.6px;height:20.5px;background:#ffffff;border-radius:3px;box-shadow:0 1px 0 #8f929b"></div>
<div class="a" style="left:1341.05px;top:618px;width:15.6px;height:20.5px;line-height:20.5px;text-align:center;font-size:12.5px;color:#111;font-family:'Liberation Sans',sans-serif">w</div>
<div class="a" style="left:1360.9px;top:619px;width:15.6px;height:20.5px;background:#ffffff;border-radius:3px;box-shadow:0 1px 0 #8f929b"></div>
<div class="a" style="left:1360.9px;top:618px;width:15.6px;height:20.5px;line-height:20.5px;text-align:center;font-size:12.5px;color:#111;font-family:'Liberation Sans',sans-serif">e</div>
<div class="a" style="left:1380.75px;top:619px;width:15.6px;height:20.5px;background:#ffffff;border-radius:3px;box-shadow:0 1px 0 #8f929b"></div>
<div class="a" style="left:1380.75px;top:618px;width:15.6px;height:20.5px;line-height:20.5px;text-align:center;font-size:12.5px;color:#111;font-family:'Liberation Sans',sans-serif">r</div>
<div class="a" style="left:1400.6px;top:619px;width:15.6px;height:20.5px;background:#ffffff;border-radius:3px;box-shadow:0 1px 0 #8f929b"></div>
<div class="a" style="left:1400.6px;top:618px;width:15.6px;height:20.5px;line-height:20.5px;text-align:center;font-size:12.5px;color:#111;font-family:'Liberation Sans',sans-serif">t</div>
<div class="a" style="left:1420.45px;top:619px;width:15.6px;height:20.5px;background:#ffffff;border-radius:3px;box-shadow:0 1px 0 #8f929b"></div>
<div class="a" style="left:1420.45px;top:618px;width:15.6px;height:20.5px;line-height:20.5px;text-align:center;font-size:12.5px;color:#111;font-family:'Liberation Sans',sans-serif">y</div>
<div class="a" style="left:1440.3px;top:619px;width:15.6px;height:20.5px;background:#ffffff;border-radius:3px;box-shadow:0 1px 0 #8f929b"></div>
<div class="a" style="left:1440.3px;top:618px;width:15.6px;height:20.5px;line-height:20.5px;text-align:center;font-size:12.5px;color:#111;font-family:'Liberation Sans',sans-serif">u</div>
<div class="a" style="left:1460.15px;top:619px;width:15.6px;height:20.5px;background:#ffffff;border-radius:3px;box-shadow:0 1px 0 #8f929b"></div>
<div class="a" style="left:1460.15px;top:618px;width:15.6px;height:20.5px;line-height:20.5px;text-align:center;font-size:12.5px;color:#111;font-family:'Liberation Sans',sans-serif">i</div>
<div class="a" style="left:1480.0px;top:619px;width:15.6px;height:20.5px;background:#ffffff;border-radius:3px;box-shadow:0 1px 0 #8f929b"></div>
<div class="a" style="left:1480.0px;top:618px;width:15.6px;height:20.5px;line-height:20.5px;text-align:center;font-size:12.5px;color:#111;font-family:'Liberation Sans',sans-serif">o</div>
<div class="a" style="left:1499.85px;top:619px;width:15.6px;height:20.5px;background:#ffffff;border-radius:3px;box-shadow:0 1px 0 #8f929b"></div>
<div class="a" style="left:1499.85px;top:618px;width:15.6px;height:20.5px;line-height:20.5px;text-align:center;font-size:12.5px;color:#111;font-family:'Liberation Sans',sans-serif">p</div>
<div class="a" style="left:1330.8px;top:646px;width:15.6px;height:20.5px;background:#ffffff;border-radius:3px;box-shadow:0 1px 0 #8f929b"></div>
<div class="a" style="left:1330.8px;top:645px;width:15.6px;height:20.5px;line-height:20.5px;text-align:center;font-size:12.5px;color:#111;font-family:'Liberation Sans',sans-serif">a</div>
<div class="a" style="left:1350.65px;top:646px;width:15.6px;height:20.5px;background:#ffffff;border-radius:3px;box-shadow:0 1px 0 #8f929b"></div>
<div class="a" style="left:1350.65px;top:645px;width:15.6px;height:20.5px;line-height:20.5px;text-align:center;font-size:12.5px;color:#111;font-family:'Liberation Sans',sans-serif">s</div>
<div class="a" style="left:1370.5px;top:646px;width:15.6px;height:20.5px;background:#ffffff;border-radius:3px;box-shadow:0 1px 0 #8f929b"></div>
<div class="a" style="left:1370.5px;top:645px;width:15.6px;height:20.5px;line-height:20.5px;text-align:center;font-size:12.5px;color:#111;font-family:'Liberation Sans',sans-serif">d</div>
<div class="a" style="left:1390.35px;top:646px;width:15.6px;height:20.5px;background:#ffffff;border-radius:3px;box-shadow:0 1px 0 #8f929b"></div>
<div class="a" style="left:1390.35px;top:645px;width:15.6px;height:20.5px;line-height:20.5px;text-align:center;font-size:12.5px;color:#111;font-family:'Liberation Sans',sans-serif">f</div>
<div class="a" style="left:1410.2px;top:646px;width:15.6px;height:20.5px;background:#ffffff;border-radius:3px;box-shadow:0 1px 0 #8f929b"></div>
<div class="a" style="left:1410.2px;top:645px;width:15.6px;height:20.5px;line-height:20.5px;text-align:center;font-size:12.5px;color:#111;font-family:'Liberation Sans',sans-serif">g</div>
<div class="a" style="left:1430.05px;top:646px;width:15.6px;height:20.5px;background:#ffffff;border-radius:3px;box-shadow:0 1px 0 #8f929b"></div>
<div class="a" style="left:1430.05px;top:645px;width:15.6px;height:20.5px;line-height:20.5px;text-align:center;font-size:12.5px;color:#111;font-family:'Liberation Sans',sans-serif">h</div>
<div class="a" style="left:1449.9px;top:646px;width:15.6px;height:20.5px;background:#ffffff;border-radius:3px;box-shadow:0 1px 0 #8f929b"></div>
<div class="a" style="left:1449.9px;top:645px;width:15.6px;height:20.5px;line-height:20.5px;text-align:center;font-size:12.5px;color:#111;font-family:'Liberation Sans',sans-serif">j</div>
<div class="a" style="left:1469.75px;top:646px;width:15.6px;height:20.5px;background:#ffffff;border-radius:3px;box-shadow:0 1px 0 #8f929b"></div>
<div class="a" style="left:1469.75px;top:645px;width:15.6px;height:20.5px;line-height:20.5px;text-align:center;font-size:12.5px;color:#111;font-family:'Liberation Sans',sans-serif">k</div>
<div class="a" style="left:1489.6px;top:646px;width:15.6px;height:20.5px;background:#ffffff;border-radius:3px;box-shadow:0 1px 0 #8f929b"></div>
<div class="a" style="left:1489.6px;top:645px;width:15.6px;height:20.5px;line-height:20.5px;text-align:center;font-size:12.5px;color:#111;font-family:'Liberation Sans',sans-serif">l</div>
<div class="a" style="left:1350.7px;top:673px;width:15.6px;height:20.5px;background:#ffffff;border-radius:3px;box-shadow:0 1px 0 #8f929b"></div>
<div class="a" style="left:1350.7px;top:672px;width:15.6px;height:20.5px;line-height:20.5px;text-align:center;font-size:12.5px;color:#111;font-family:'Liberation Sans',sans-serif">z</div>
<div class="a" style="left:1370.55px;top:673px;width:15.6px;height:20.5px;background:#ffffff;border-radius:3px;box-shadow:0 1px 0 #8f929b"></div>
<div class="a" style="left:1370.55px;top:672px;width:15.6px;height:20.5px;line-height:20.5px;text-align:center;font-size:12.5px;color:#111;font-family:'Liberation Sans',sans-serif">x</div>
<div class="a" style="left:1390.4px;top:673px;width:15.6px;height:20.5px;background:#ffffff;border-radius:3px;box-shadow:0 1px 0 #8f929b"></div>
<div class="a" style="left:1390.4px;top:672px;width:15.6px;height:20.5px;line-height:20.5px;text-align:center;font-size:12.5px;color:#111;font-family:'Liberation Sans',sans-serif">c</div>
<div class="a" style="left:1410.25px;top:673px;width:15.6px;height:20.5px;background:#ffffff;border-radius:3px;box-shadow:0 1px 0 #8f929b"></div>
<div class="a" style="left:1410.25px;top:672px;width:15.6px;height:20.5px;line-height:20.5px;text-align:center;font-size:12.5px;color:#111;font-family:'Liberation Sans',sans-serif">v</div>
<div class="a" style="left:1430.1px;top:673px;width:15.6px;height:20.5px;background:#ffffff;border-radius:3px;box-shadow:0 1px 0 #8f929b"></div>
<div class="a" style="left:1430.1px;top:672px;width:15.6px;height:20.5px;line-height:20.5px;text-align:center;font-size:12.5px;color:#111;font-family:'Liberation Sans',sans-serif">b</div>
<div class="a" style="left:1449.95px;top:673px;width:15.6px;height:20.5px;background:#ffffff;border-radius:3px;box-shadow:0 1px 0 #8f929b"></div>
<div class="a" style="left:1449.95px;top:672px;width:15.6px;height:20.5px;line-height:20.5px;text-align:center;font-size:12.5px;color:#111;font-family:'Liberation Sans',sans-serif">n</div>
<div class="a" style="left:1469.8px;top:673px;width:15.6px;height:20.5px;background:#ffffff;border-radius:3px;box-shadow:0 1px 0 #8f929b"></div>
<div class="a" style="left:1469.8px;top:672px;width:15.6px;height:20.5px;line-height:20.5px;text-align:center;font-size:12.5px;color:#111;font-family:'Liberation Sans',sans-serif">m</div>
<div class="a" style="left:1321.2px;top:673px;width:21.3px;height:20.5px;background:#b3b6c0;border-radius:3px;box-shadow:0 1px 0 #8f929b"></div>
<svg class="a" style="left:1328px;top:678.5px;" width="8" height="10" viewBox="0 0 8 10"><path d="M4 0.8L0.6 4.6H2.4V8H5.6V4.6H7.4Z" fill="#111" stroke="#111" stroke-width="0.8" stroke-linejoin="round"/></svg>
<div class="a" style="left:1494px;top:673px;width:21.5px;height:20.5px;background:#b3b6c0;border-radius:3px;box-shadow:0 1px 0 #8f929b"></div>
<svg class="a" style="left:1498.5px;top:678.5px;" width="13" height="9" viewBox="0 0 13 9"><path d="M4 0.7H12.3V8.3H4L0.7 4.5Z" fill="none" stroke="#222" stroke-width="1"/><path d="M6.3 2.6L9.9 6.2M9.9 2.6L6.3 6.2" stroke="#222" stroke-width="1"/></svg>
<div class="a" style="left:1321.2px;top:700px;width:47px;height:21px;background:#b3b6c0;border-radius:3px;box-shadow:0 1px 0 #8f929b"></div>
<div class="a" style="left:1321.2px;top:699px;width:47px;height:21px;line-height:21px;text-align:center;font-size:8.5px;color:#111;font-family:'Liberation Sans',sans-serif">123</div>
<div class="a" style="left:1373px;top:700px;width:91px;height:21px;background:#ffffff;border-radius:3px;box-shadow:0 1px 0 #8f929b"></div>
<div class="a" style="left:1373px;top:698px;width:91px;height:21px;line-height:21px;text-align:center;font-size:8.5px;color:#111;font-family:'Liberation Sans',sans-serif">space</div>
<div class="a" style="left:1468px;top:700px;width:47.5px;height:21px;background:#b3b6c0;border-radius:3px;box-shadow:0 1px 0 #8f929b"></div>
<div class="a" style="left:1468px;top:699px;width:47.5px;height:21px;line-height:21px;text-align:center;font-size:8.5px;color:#111;font-family:'Liberation Sans',sans-serif">return</div>
<svg class="a" style="left:1336px;top:733px;" width="14" height="14" viewBox="0 0 14 14"><circle cx="7" cy="7" r="6.2" fill="none" stroke="#555" stroke-width="1.1"/><circle cx="4.8" cy="5.4" r="0.9" fill="#555"/><circle cx="9.2" cy="5.4" r="0.9" fill="#555"/><path d="M3.6 8C4.2 10.2 5.4 11 7 11C8.6 11 9.8 10.2 10.4 8Z" fill="#555"/></svg>
<svg class="a" style="left:1489px;top:732px;" width="9" height="16" viewBox="0 0 9 16"><rect x="2.5" y="0.8" width="4" height="8.5" rx="2" fill="none" stroke="#555" stroke-width="1.1"/><path d="M0.9 6.5C0.9 9.5 2.6 11 4.5 11C6.4 11 8.1 9.5 8.1 6.5M4.5 11V14.5M2 14.8H7" fill="none" stroke="#555" stroke-width="1.1"/></svg>
<div class="a" style="left:1381px;top:756px;width:75px;height:2.8px;background:#050505;border-radius:2px"></div>
</div>
</body></html>
